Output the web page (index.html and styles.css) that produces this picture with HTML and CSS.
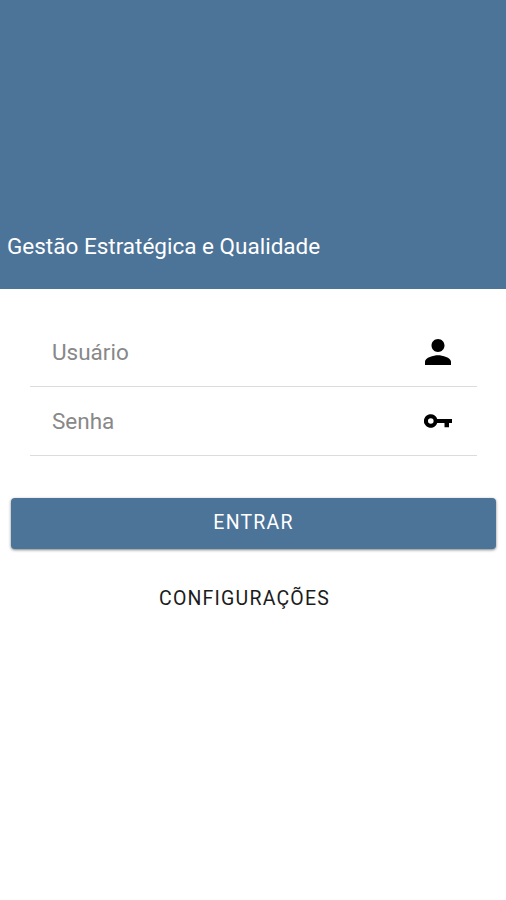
FILE: index.html
```html
<!DOCTYPE html>
<html lang="pt-BR">
<head>
    <meta charset="UTF-8">
    <meta name="viewport" content="width=device-width, initial-scale=1.0">
    <title>Gestão Estratégica e Qualidade</title>
    <link rel="stylesheet" href="styles.css">
</head>
<body>

    <header class="header">
        <h1>Gestão Estratégica e Qualidade</h1>
    </header>

    <form class="login-form">
        <div class="fields">
            <label class="field">
                <input type="text" placeholder="Usuário">
                <svg class="icon icon-user" viewBox="4 4 16 16" preserveAspectRatio="none">
                    <path d="M12 12c2.21 0 4-1.79 4-4s-1.79-4-4-4-4 1.79-4 4 1.79 4 4 4zm0 2c-2.67 0-8 1.34-8 4v2h16v-2c0-2.66-5.33-4-8-4z"/>
                </svg>
            </label>
            <label class="field">
                <input type="password" placeholder="Senha">
                <svg class="icon icon-key" viewBox="0 0 28 14">
                    <path fill-rule="evenodd" d="M13.2 5A6.8 6.8 0 1 0 13.2 9H20.5V13.2H25V9H28V5ZM6.8 4.2A2.8 2.8 0 1 1 6.8 9.8A2.8 2.8 0 1 1 6.8 4.2Z"/>
                </svg>
            </label>
        </div>

        <button type="submit" class="btn btn-primary">Entrar</button>
        <button type="button" class="btn btn-link">Configurações</button>
    </form>

</body>
</html>
```
FILE: styles.css
```css
* {
    box-sizing: border-box;
}

body {
    margin: 0;
    min-height: 100vh;
    background-color: #ffffff;
    font-family: Roboto, sans-serif;
}

/* --- Header --- */
.header {
    display: flex;
    align-items: flex-end;
    height: 289px;
    padding: 0 7px 30px;
    background-color: #4c7398;
}

h1 {
    margin: 0;
    color: #ffffff;
    font-size: 22.5px;
    font-weight: 400;
    line-height: 26px;
}

/* --- Login --- */
.login-form {
    display: flex;
    flex-direction: column;
    padding: 29px 10px 0 11px;
}

.fields {
    margin: 0 19px 42px;
}

.field {
    display: flex;
    align-items: center;
    height: 69px;
    padding: 0 25px 0 22px;
    border-bottom: 1px solid #dcdcdc;
}

.field input {
    flex: 1;
    min-width: 0;
    padding: 0;
    border: none;
    outline: none;
    background: none;
    color: #000000;
    font-family: inherit;
    font-size: 22.5px;
}

.field input::placeholder {
    color: #888888;
    opacity: 1;
}

.icon {
    flex: none;
    fill: #000000;
}

.icon-user {
    width: 26px;
    height: 26px;
    margin-right: 1px;
}

.icon-key {
    width: 28px;
    height: 14px;
}

/* --- Buttons --- */
.btn {
    height: 50px;
    padding: 0;
    border: none;
    border-radius: 4px;
    background: none;
    font-family: inherit;
    font-size: 19.5px;
    letter-spacing: 1.2px;
    text-transform: uppercase;
    cursor: pointer;
}

.btn-primary {
    height: 51px;
    padding-bottom: 2px;
    background-color: #4c7398;
    color: #ffffff;
    box-shadow: 0 1px 3px rgba(0, 0, 0, 0.5);
}

.btn-link {
    align-self: center;
    margin: 24px 18px 0 0;
    color: #1c1c1c;
}
```
